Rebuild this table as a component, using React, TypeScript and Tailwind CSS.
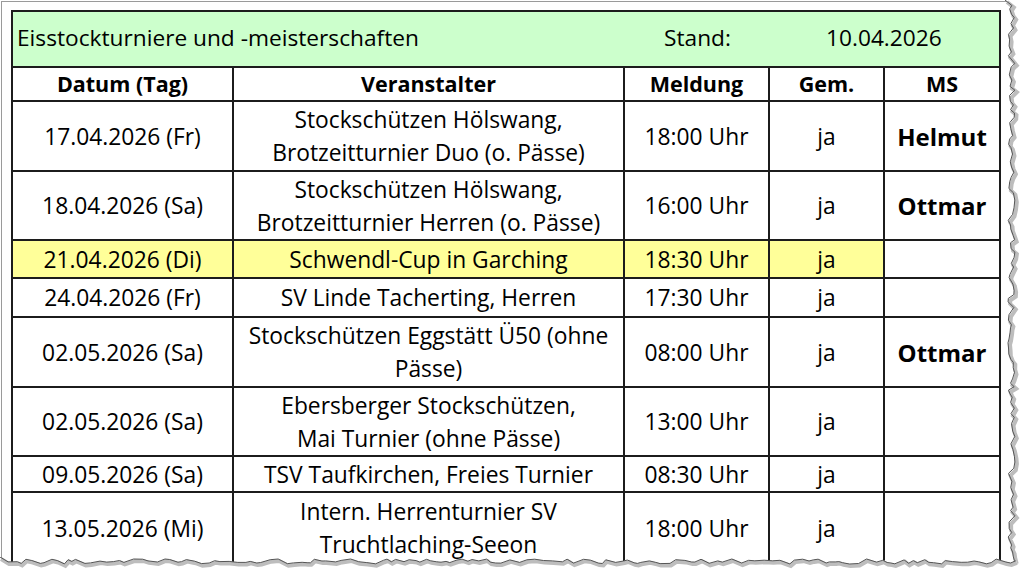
import React from "react";

type Row = {
  date: string;
  org: string[];
  time: string;
  gem: string;
  ms: string;
  h: number;
  hl?: boolean;
};

const rows: Row[] = [
  { date: "17.04.2026 (Fr)", org: ["Stockschützen Hölswang,", "Brotzeitturnier Duo (o. Pässe)"], time: "18:00 Uhr", gem: "ja", ms: "Helmut", h: 70 },
  { date: "18.04.2026 (Sa)", org: ["Stockschützen Hölswang,", "Brotzeitturnier Herren (o. Pässe)"], time: "16:00 Uhr", gem: "ja", ms: "Ottmar", h: 69 },
  { date: "21.04.2026 (Di)", org: ["Schwendl-Cup in Garching"], time: "18:30 Uhr", gem: "ja", ms: "", h: 38, hl: true },
  { date: "24.04.2026 (Fr)", org: ["SV Linde Tacherting, Herren"], time: "17:30 Uhr", gem: "ja", ms: "", h: 39 },
  { date: "02.05.2026 (Sa)", org: ["Stockschützen Eggstätt Ü50 (ohne", "Pässe)"], time: "08:00 Uhr", gem: "ja", ms: "Ottmar", h: 70 },
  { date: "02.05.2026 (Sa)", org: ["Ebersberger Stockschützen,", "Mai Turnier (ohne Pässe)"], time: "13:00 Uhr", gem: "ja", ms: "", h: 69 },
  { date: "09.05.2026 (Sa)", org: ["TSV Taufkirchen, Freies Turnier"], time: "08:30 Uhr", gem: "ja", ms: "", h: 36 },
  { date: "13.05.2026 (Mi)", org: ["Intern. Herrenturnier SV", "Truchtlaching-Seeon"], time: "18:00 Uhr", gem: "ja", ms: "", h: 72 },
];

function rand(seed: number) {
  let s = seed;
  return () => {
    s = (s * 9301 + 49297) % 233280;
    return s / 233280;
  };
}

function rightEdge(): string {
  const r = rand(7);
  let d = "M 0 0";
  let y = 0;
  while (y < 566) {
    y += 3 + r() * 5;
    const x = 3 + r() * 7;
    d += ` L ${x.toFixed(1)} ${y.toFixed(1)}`;
  }
  return d;
}

function bottomEdge(): string {
  const r = rand(13);
  let d = "M 0 0";
  let x = 0;
  while (x < 1012) {
    x += 3 + r() * 7;
    const y = 2 + r() * 5;
    d += ` L ${x.toFixed(1)} ${y.toFixed(1)}`;
  }
  return d;
}

export default function App() {
  const re = rightEdge();
  const be = bottomEdge();
  const cell = "border-2 border-[#1c1c1c] text-center align-middle p-0 whitespace-nowrap";
  return (
    <div
      className="relative w-[1024px] h-[576px] bg-white overflow-hidden text-black"
      style={{ fontFamily: '"Open Sans", "Noto Sans", sans-serif' }}
    >
      <div className="ml-[1px] mt-[1px] w-[1008px] h-[562px] border-l border-t border-[#9a9a9a] overflow-hidden pl-[9px] pt-[8px]">
        <table className="table-fixed border-collapse">
          <colgroup>
            <col className="w-[221px]" />
            <col className="w-[391px]" />
            <col className="w-[145px]" />
            <col className="w-[115px]" />
            <col className="w-[116px]" />
          </colgroup>
          <tbody>
            <tr className="h-[56px] bg-[#ccffcc]">
              <td colSpan={5} className="border-2 border-[#1c1c1c] p-0">
                <div className="flex items-center text-[22.7px] leading-none h-[54px] pb-[2px]">
                  <span className="pl-[4px] w-[651px]">Eisstockturniere und -meisterschaften</span>
                  <span className="w-[162px]">Stand:</span>
                  <span>10.04.2026</span>
                </div>
              </td>
            </tr>
            <tr className="h-[34px] font-bold text-[21.5px] leading-none">
              <td className={cell}>Datum (Tag)</td>
              <td className={cell}>Veranstalter</td>
              <td className={cell}>Meldung</td>
              <td className={cell}>Gem.</td>
              <td className={cell}>MS</td>
            </tr>
            {rows.map((r, i) => (
              <tr key={i} style={{ height: r.h }} className="text-[22.8px] leading-[33px]">
                <td className={`${cell} ${r.hl ? "bg-[#ffff99]" : ""}`}>{r.date}</td>
                <td className={`${cell} ${r.hl ? "bg-[#ffff99]" : ""}`}>
                  {r.org.map((l, j) => (
                    <div key={j}>{l}</div>
                  ))}
                </td>
                <td className={`${cell} ${r.hl ? "bg-[#ffff99]" : ""}`}>{r.time}</td>
                <td className={`${cell} ${r.hl ? "bg-[#ffff99]" : ""}`}>{r.gem}</td>
                <td className={`${cell} font-bold text-[24px]`}>{r.ms}</td>
              </tr>
            ))}
          </tbody>
        </table>
      </div>
      <svg className="absolute left-[1002px] top-[0px]" width="22" height="576">
        <path d={re + " L 22 566 L 22 0 Z"} fill="white" transform="translate(3,0)" />
        <path d={re} fill="none" stroke="#bdbdbd" strokeWidth="4" transform="translate(5,2)" />
        <path d={re} fill="none" stroke="#555" strokeWidth="1" transform="translate(3,0)" />
      </svg>
      <svg className="absolute left-[0px] top-[557px]" width="1024" height="19">
        <path d={be + " L 1024 19 L 0 19 Z"} fill="white" />
        <path d={be} fill="none" stroke="#bdbdbd" strokeWidth="4" transform="translate(1,2)" />
        <path d={be} fill="none" stroke="#555" strokeWidth="1" />
      </svg>
    </div>
  );
}
